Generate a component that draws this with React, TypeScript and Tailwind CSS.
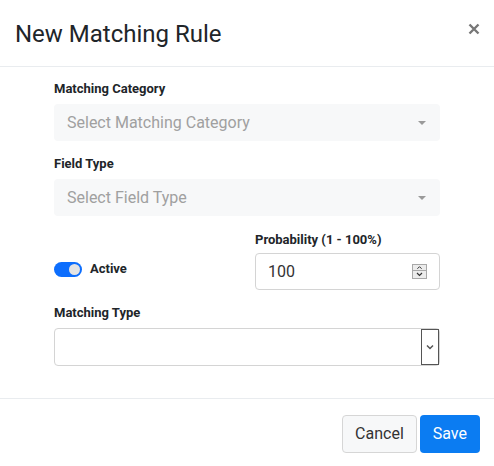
import React from "react";

function Caret() {
  return (
    <svg width="10" height="6" viewBox="0 0 10 6" className="text-[#9a9a9a]">
      <path d="M1 1h8L5 5z" fill="currentColor" />
    </svg>
  );
}

function Label({ children, tight }: { children: React.ReactNode; tight?: boolean }) {
  return (
    <div className={(tight ? "mb-[5px] " : "mb-[7px] ") + "text-[13px] font-bold leading-[16px] text-[#212529]"}>
      {children}
    </div>
  );
}

function PlaceholderSelect({ text }: { text: string }) {
  return (
    <div className="flex h-[37px] items-center justify-between rounded-[4px] bg-[#f7f8f9] pl-[13px] pr-[13px]">
      <span className="text-[16px] text-[#a0a0a0]">{text}</span>
      <Caret />
    </div>
  );
}

export default function App() {
  return (
    <div className="h-[466px] w-[494px] bg-white text-[#212529]" style={{ fontFamily: "Roboto, 'Liberation Sans', sans-serif" }}>
      <div className="flex h-[67px] items-center justify-between border-b border-[#e9ecef] pl-[15px] pr-[14px]">
        <h5 className="pt-[1px] text-[24px] font-normal leading-none text-[#212529]">New Matching Rule</h5>
        <svg width="12" height="12" viewBox="0 0 12 12" className="-mt-[8px]">
          <path d="M1.5 1.5l9 9M10.5 1.5l-9 9" stroke="#777" strokeWidth="2.4" />
        </svg>
      </div>

      <div className="h-[331px] px-[54px] pt-[14px]">
        <Label>Matching Category</Label>
        <PlaceholderSelect text="Select Matching Category" />

        <div className="mt-[15px]">
          <Label>Field Type</Label>
          <PlaceholderSelect text="Select Field Type" />
        </div>

        <div className="mt-[16px] flex items-end">
          <div className="flex h-[38px] w-[201px] items-center gap-[8px] pb-[4px]">
            <div className="relative h-[15px] w-[28px] rounded-full bg-[#0d6efd]">
              <div className="absolute right-[2px] top-[2px] h-[11px] w-[11px] rounded-full bg-[#e4e4e4]" />
            </div>
            <span className="text-[13px] font-bold text-[#212529]">Active</span>
          </div>
          <div className="flex-1">
            <Label tight>Probability (1 - 100%)</Label>
            <div className="flex h-[37px] items-center justify-between rounded-[4px] border border-[#d4d4d4] pl-[12px] pr-[12px]">
              <span className="text-[16px] text-[#333]">100</span>
              <div className="flex h-[15px] w-[15px] flex-col border border-[#a8a8a8] bg-[#ececec]">
                <svg viewBox="0 0 13 6" className="h-[6px] w-[13px] border-b border-[#a8a8a8]">
                  <path d="M4 4.5l2.5-2.5 2.5 2.5" fill="none" stroke="#333" strokeWidth="1.2" />
                </svg>
                <svg viewBox="0 0 13 7" className="h-[7px] w-[13px]">
                  <path d="M4 2l2.5 2.5 2.5-2.5" fill="none" stroke="#333" strokeWidth="1.2" />
                </svg>
              </div>
            </div>
          </div>
        </div>

        <div className="mt-[15px]">
          <Label>Matching Type</Label>
          <div className="flex h-[38px] items-stretch justify-end rounded-[4px] border border-[#d4d4d4]">
            <div className="flex w-[18px] items-center justify-center border border-[#555] bg-white">
              <svg width="8" height="6" viewBox="0 0 8 6">
                <path d="M1 1.5l3 3 3-3" fill="none" stroke="#555" strokeWidth="1.5" />
              </svg>
            </div>
          </div>
        </div>
      </div>

      <div className="flex h-[68px] items-start justify-end gap-[3px] border-t border-[#e9ecef] pr-[14px] pt-[16px]">
        <button className="h-[38px] rounded-[4px] border border-[#d6d6d6] bg-[#f7f8f9] px-[12px] text-[16px] text-[#333]">Cancel</button>
        <button className="h-[38px] rounded-[4px] bg-[#0b7cf2] px-[13px] text-[16px] text-white">Save</button>
      </div>
    </div>
  );
}
